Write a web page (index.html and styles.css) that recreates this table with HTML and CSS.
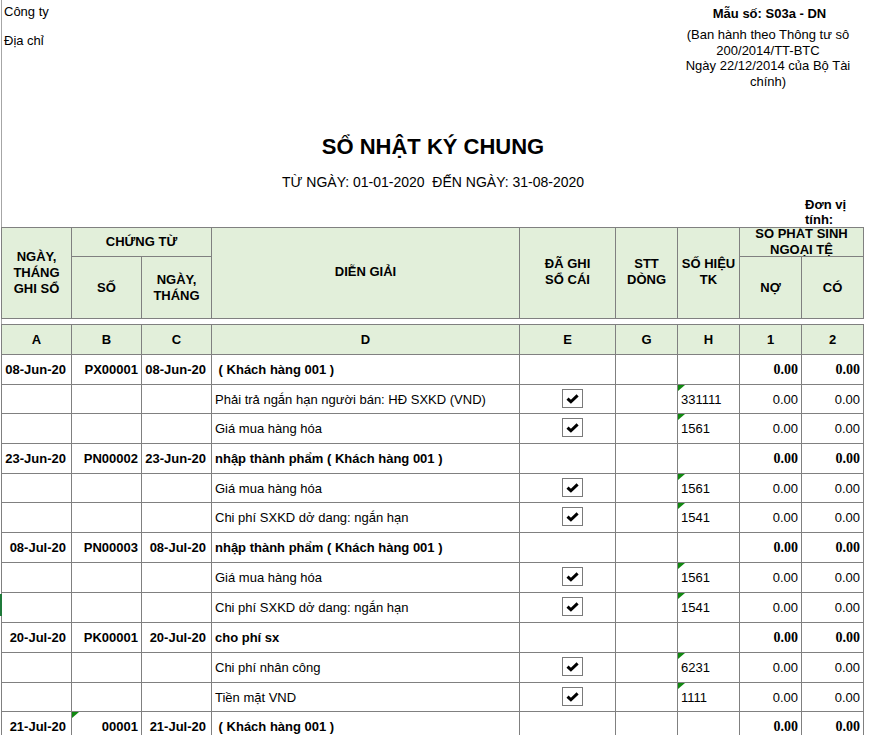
FILE: index.html
```html
<!DOCTYPE html>
<html lang="vi">
<head>
<meta charset="utf-8">
<title>Sổ nhật ký chung</title>
<link rel="stylesheet" href="styles.css">
</head>
<body>
<div class="sheet">
  <header class="top">
    <div class="co">
      <div class="left">
        <div class="ln">Công ty</div>
        <div class="ln addr">Địa chỉ</div>
      </div>
      <div class="form">
        <div class="code">Mẫu số: S03a - DN</div>
        <div class="note">(Ban hành theo Thông tư sô<br>200/2014/TT-BTC<br>Ngày 22/12/2014 của Bộ Tài<br>chính)</div>
      </div>
    </div>
    <h1 class="title">SỔ NHẬT KÝ CHUNG</h1>
    <p class="period">TỪ NGÀY: 01-01-2020  ĐẾN NGÀY: 31-08-2020</p>
    <div class="unitrow"><div class="unit">Đơn vị<br>tính:</div></div>
  </header>
  <table class="journal">
    <colgroup>
      <col class="w70"><col class="w70"><col class="w70"><col class="w308"><col class="w96"><col class="w62"><col class="w62"><col class="w62"><col class="w62">
    </colgroup>
    <thead>
      <tr class="h1r">
        <th rowspan="2">NGÀY,<br>THÁNG<br>GHI SỔ</th>
        <th colspan="2">CHỨNG TỪ</th>
        <th rowspan="2" class="dg">DIỄN GIẢI</th>
        <th rowspan="2" class="dg">ĐÃ GHI<br>SỔ CÁI</th>
        <th rowspan="2" class="dg">STT<br>DÒNG</th>
        <th rowspan="2" class="dg">SỐ HIỆU<br>TK</th>
        <th colspan="2"><div class="clip">SỐ PHÁT SINH<br>NGOẠI TỆ</div></th>
      </tr>
      <tr class="h2r">
        <th>SỐ</th>
        <th>NGÀY,<br>THÁNG</th>
        <th>NỢ</th>
        <th>CÓ</th>
      </tr>
      <tr class="gap"><td colspan="9"></td></tr>
      <tr class="letters">
        <th>A</th><th>B</th><th>C</th><th>D</th><th>E</th><th>G</th><th>H</th><th>1</th><th>2</th>
      </tr>
    </thead>
    <tbody>
      <tr class="grp r30">
        <td class="dt">08-Jun-20</td><td class="no">PX00001</td><td class="dt">08-Jun-20</td>
        <td class="desc"> ( Khách hàng 001 )</td><td></td><td></td><td></td>
        <td class="num">0.00</td><td class="num">0.00</td>
      </tr>
      <tr class="r29">
        <td></td><td></td><td></td>
        <td class="desc">Phải trả ngắn hạn người bán: HĐ SXKD (VND)</td>
        <td class="chk"><svg class="cb" viewBox="0 0 21 19" width="21" height="19"><rect x="0.5" y="0.5" width="20" height="18" fill="#fff" stroke="#7a7a7a"/><path d="M5.5 9.6 L8.9 12.8 L15.6 6.4" fill="none" stroke="#000" stroke-width="3"/></svg></td>
        <td></td><td class="acc">331111</td>
        <td class="num">0.00</td><td class="num">0.00</td>
      </tr>
      <tr class="r30">
        <td></td><td></td><td></td>
        <td class="desc">Giá mua hàng hóa</td>
        <td class="chk"><svg class="cb" viewBox="0 0 21 19" width="21" height="19"><rect x="0.5" y="0.5" width="20" height="18" fill="#fff" stroke="#7a7a7a"/><path d="M5.5 9.6 L8.9 12.8 L15.6 6.4" fill="none" stroke="#000" stroke-width="3"/></svg></td>
        <td></td><td class="acc">1561</td>
        <td class="num">0.00</td><td class="num">0.00</td>
      </tr>
      <tr class="grp r30">
        <td class="dt">23-Jun-20</td><td class="no">PN00002</td><td class="dt">23-Jun-20</td>
        <td class="desc">nhập thành phẩm ( Khách hàng 001 )</td><td></td><td></td><td></td>
        <td class="num">0.00</td><td class="num">0.00</td>
      </tr>
      <tr class="r29">
        <td></td><td></td><td></td>
        <td class="desc">Giá mua hàng hóa</td>
        <td class="chk"><svg class="cb" viewBox="0 0 21 19" width="21" height="19"><rect x="0.5" y="0.5" width="20" height="18" fill="#fff" stroke="#7a7a7a"/><path d="M5.5 9.6 L8.9 12.8 L15.6 6.4" fill="none" stroke="#000" stroke-width="3"/></svg></td>
        <td></td><td class="acc">1561</td>
        <td class="num">0.00</td><td class="num">0.00</td>
      </tr>
      <tr class="r30">
        <td></td><td></td><td></td>
        <td class="desc">Chi phí SXKD dở dang: ngắn hạn</td>
        <td class="chk"><svg class="cb" viewBox="0 0 21 19" width="21" height="19"><rect x="0.5" y="0.5" width="20" height="18" fill="#fff" stroke="#7a7a7a"/><path d="M5.5 9.6 L8.9 12.8 L15.6 6.4" fill="none" stroke="#000" stroke-width="3"/></svg></td>
        <td></td><td class="acc">1541</td>
        <td class="num">0.00</td><td class="num">0.00</td>
      </tr>
      <tr class="grp r30">
        <td class="dt">08-Jul-20</td><td class="no">PN00003</td><td class="dt">08-Jul-20</td>
        <td class="desc">nhập thành phẩm ( Khách hàng 001 )</td><td></td><td></td><td></td>
        <td class="num">0.00</td><td class="num">0.00</td>
      </tr>
      <tr class="r30">
        <td></td><td></td><td></td>
        <td class="desc">Giá mua hàng hóa</td>
        <td class="chk"><svg class="cb" viewBox="0 0 21 19" width="21" height="19"><rect x="0.5" y="0.5" width="20" height="18" fill="#fff" stroke="#7a7a7a"/><path d="M5.5 9.6 L8.9 12.8 L15.6 6.4" fill="none" stroke="#000" stroke-width="3"/></svg></td>
        <td></td><td class="acc">1561</td>
        <td class="num">0.00</td><td class="num">0.00</td>
      </tr>
      <tr class="r30">
        <td class="mark"></td><td></td><td></td>
        <td class="desc">Chi phí SXKD dở dang: ngắn hạn</td>
        <td class="chk"><svg class="cb" viewBox="0 0 21 19" width="21" height="19"><rect x="0.5" y="0.5" width="20" height="18" fill="#fff" stroke="#7a7a7a"/><path d="M5.5 9.6 L8.9 12.8 L15.6 6.4" fill="none" stroke="#000" stroke-width="3"/></svg></td>
        <td></td><td class="acc">1541</td>
        <td class="num">0.00</td><td class="num">0.00</td>
      </tr>
      <tr class="grp r30">
        <td class="dt">20-Jul-20</td><td class="no">PK00001</td><td class="dt">20-Jul-20</td>
        <td class="desc">cho phí sx</td><td></td><td></td><td></td>
        <td class="num">0.00</td><td class="num">0.00</td>
      </tr>
      <tr class="r30">
        <td></td><td></td><td></td>
        <td class="desc">Chi phí nhân công</td>
        <td class="chk"><svg class="cb" viewBox="0 0 21 19" width="21" height="19"><rect x="0.5" y="0.5" width="20" height="18" fill="#fff" stroke="#7a7a7a"/><path d="M5.5 9.6 L8.9 12.8 L15.6 6.4" fill="none" stroke="#000" stroke-width="3"/></svg></td>
        <td></td><td class="acc">6231</td>
        <td class="num">0.00</td><td class="num">0.00</td>
      </tr>
      <tr class="r29">
        <td></td><td></td><td></td>
        <td class="desc">Tiền mặt VND</td>
        <td class="chk"><svg class="cb" viewBox="0 0 21 19" width="21" height="19"><rect x="0.5" y="0.5" width="20" height="18" fill="#fff" stroke="#7a7a7a"/><path d="M5.5 9.6 L8.9 12.8 L15.6 6.4" fill="none" stroke="#000" stroke-width="3"/></svg></td>
        <td></td><td class="acc">1111</td>
        <td class="num">0.00</td><td class="num">0.00</td>
      </tr>
      <tr class="grp r30">
        <td class="dt">21-Jul-20</td><td class="no tri">00001</td><td class="dt">21-Jul-20</td>
        <td class="desc"> ( Khách hàng 001 )</td><td></td><td></td><td></td>
        <td class="num">0.00</td><td class="num">0.00</td>
      </tr>
    </tbody>
  </table>
</div>
</body>
</html>
```
FILE: styles.css
```css
html, body {
  margin: 0;
  padding: 0;
  background: #fff;
}
body {
  font-family: "Liberation Sans", Arial, sans-serif;
  font-size: 13px;
  color: #000;
  overflow: hidden;
}
.sheet {
  margin-left: 1px;
  border-left: 1px solid #a6a6a6;
  width: 876px;
  min-height: 735px;
}
.top {
  width: 862px;
}
.co {
  display: flex;
  justify-content: space-between;
  align-items: flex-start;
  height: 89px;
}
.left {
  padding: 4px 0 0 2px;
}
.ln {
  line-height: 16px;
}
.addr {
  margin-top: 13px;
}
.form {
  width: 186px;
  text-align: center;
  padding-top: 6px;
  padding-right: 3px;
}
.code {
  font-weight: bold;
  line-height: 16px;
  margin-left: 3px;
}
.note {
  margin-top: 5px;
  line-height: 15.5px;
}
.title {
  margin: 45px 0 0;
  font-size: 22px;
  line-height: 26px;
  font-weight: bold;
  text-align: center;
}
.period {
  margin: 14px 0 0;
  font-size: 14px;
  line-height: 16px;
  text-align: center;
  white-space: pre;
}
.unitrow {
  display: flex;
  justify-content: flex-end;
  margin-top: 7px;
}
.unit {
  width: 59px;
  padding-left: 3px;
  font-weight: bold;
  line-height: 15px;
  height: 30px;
}

/* table */
.journal {
  margin-left: -1px;
  border-collapse: collapse;
  table-layout: fixed;
  width: 863px;
}
.w70 { width: 70px; }
.w308 { width: 308px; }
.w96 { width: 96px; }
.w62 { width: 62px; }

.journal th,
.journal td {
  border: 1px solid #808080;
  padding: 0;
  vertical-align: middle;
  white-space: nowrap;
}
.journal th {
  background: #e2efda;
  font-weight: bold;
  font-size: 13px;
  line-height: 16px;
  text-align: center;
}
.h1r { height: 29px; }
.h2r { height: 62px; }
.h1r .dg { padding-bottom: 2px; }
.clip {
  height: 28px;
  overflow: hidden;
  display: flex;
  align-items: center;
  justify-content: center;
}
.gap { height: 6px; }
.journal .gap td {
  border: none;
  padding: 0;
  height: 5px;
}
.letters { height: 30px; }
.r30 { height: 30px; }
.r29 { height: 29px; }

.grp td { font-weight: bold; }
.dt {
  text-align: right;
  padding-right: 5px !important;
}
.no {
  text-align: right;
  padding-right: 3px !important;
}
.desc {
  padding-left: 3px !important;
  white-space: pre !important;
}
.chk {
  padding-left: 42px !important;
  padding-bottom: 2px !important;
}
.cb {
  display: block;
}
.acc {
  padding-left: 3px !important;
  position: relative;
}
.acc::before,
.tri::before {
  content: "";
  position: absolute;
  left: 0;
  top: 0;
  border-top: 6px solid #118811;
  border-right: 7px solid transparent;
}
.tri { position: relative; }
.num {
  text-align: right;
  padding-right: 3px !important;
}
.grp .num {
  font-family: "Liberation Serif", "Times New Roman", serif;
  font-size: 14px;
}
.mark { position: relative; }
.mark::after {
  content: "";
  position: absolute;
  left: -2px;
  top: 1px;
  width: 2px;
  height: 22px;
  background: #1f7a3a;
}
```
